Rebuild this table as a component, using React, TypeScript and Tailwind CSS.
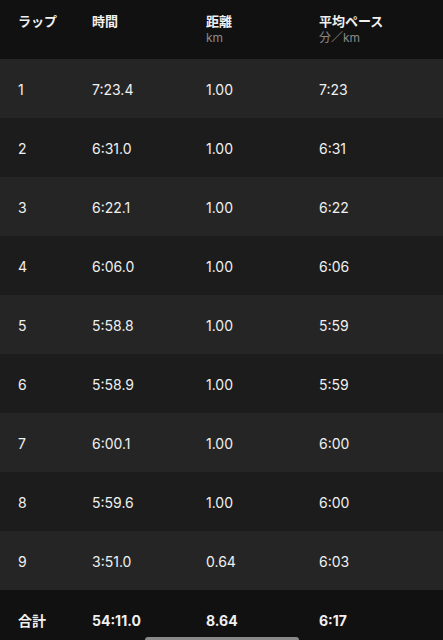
import React from "react";

const rows = [
  ["1", "7:23.4", "1.00", "7:23"],
  ["2", "6:31.0", "1.00", "6:31"],
  ["3", "6:22.1", "1.00", "6:22"],
  ["4", "6:06.0", "1.00", "6:06"],
  ["5", "5:58.8", "1.00", "5:59"],
  ["6", "5:58.9", "1.00", "5:59"],
  ["7", "6:00.1", "1.00", "6:00"],
  ["8", "5:59.6", "1.00", "6:00"],
  ["9", "3:51.0", "0.64", "6:03"],
];

const font = { fontFamily: 'Inter, "Noto Sans CJK JP", sans-serif' };

export default function App() {
  return (
    <div className="w-[443px] h-[640px] bg-[#111111] text-[#f0f0f0] relative overflow-hidden" style={font}>
      <div className="h-[59px] grid grid-cols-[74px_114px_113px_1fr] pl-[18px] pt-[12px] text-[13px] font-bold leading-[18px]">
        <div>ラップ</div>
        <div>時間</div>
        <div>
          <div>距離</div>
          <div className="text-[12px] font-normal text-[#8a8a8a] leading-[16px]">km</div>
        </div>
        <div>
          <div>平均ペース</div>
          <div className="text-[12px] font-normal text-[#8a8a8a] leading-[16px]">分／km</div>
        </div>
      </div>
      {rows.map((r, i) => (
        <div
          key={i}
          className={`h-[59px] grid grid-cols-[74px_114px_113px_1fr] items-center pl-[18px] pt-[1px] text-[14px] ${i % 2 === 0 ? "bg-[#252525]" : "bg-[#1c1c1c]"}`}
        >
          {r.map((c, j) => (
            <div key={j}>{c}</div>
          ))}
        </div>
      ))}
      <div className="h-[50px] grid grid-cols-[74px_114px_113px_1fr] items-center pl-[18px] text-[14px] font-bold pt-[10px]">
        <div>合計</div>
        <div>54:11.0</div>
        <div>8.64</div>
        <div>6:17</div>
      </div>
      <div className="absolute left-[145px] bottom-0 w-[154px] h-[3px] rounded-t-full bg-[#8a8a8a]" />
    </div>
  );
}
